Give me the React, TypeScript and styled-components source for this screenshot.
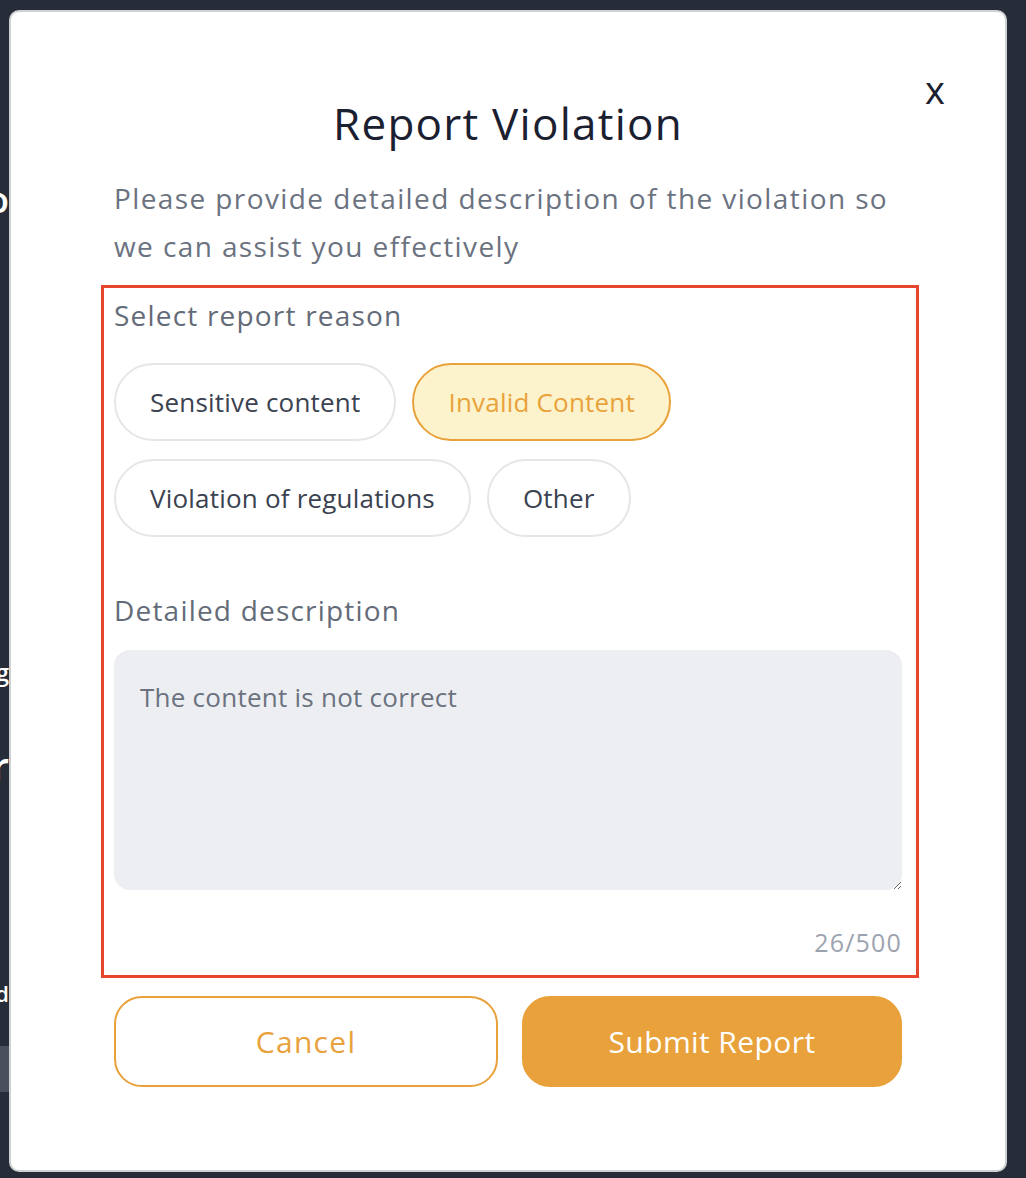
import { useState } from "react";
import styled, { createGlobalStyle } from "styled-components";

const GlobalStyle = createGlobalStyle`
  html, body {
    margin: 0;
    padding: 0;
    background: #272d38;
  }
  * {
    box-sizing: border-box;
  }
  body {
    font-family: "Open Sans", "Liberation Sans", sans-serif;
  }
`;

const ORANGE = "#e9a23b";

const Page = styled.div`
  position: relative;
  width: 1026px;
  height: 1178px;
  overflow: hidden;
  background: #272d38;
`;

/* the page behind the dialog, mostly hidden */
const Backdrop = styled.div`
  width: 9px;
  display: flex;
  flex-direction: column;
  overflow: hidden;
  color: #fff;
`;

const Peek = styled.div<{ $top: number; $size: number; $h: number }>`
  display: flex;
  justify-content: flex-end;
  white-space: nowrap;
  margin-top: ${({ $top }) => $top}px;
  height: ${({ $h }) => $h}px;
  font-size: ${({ $size }) => $size}px;
  line-height: ${({ $h }) => $h}px;
  font-weight: 600;
`;

const GreyBar = styled.div`
  margin-top: 38px;
  height: 46px;
  background: #4a505b;
`;

const Overlay = styled.div`
  position: absolute;
  inset: 0;
  padding: 10px 19px 6px 9px;
`;

const Modal = styled.div`
  position: relative;
  height: 100%;
  background: #fff;
  border: 2px solid #cfd0d3;
  border-radius: 10px;
  padding: 81px 103px 0 103px;
  display: flex;
  flex-direction: column;
`;

const Close = styled.button`
  position: absolute;
  top: 57px;
  right: 60px;
  border: none;
  background: transparent;
  padding: 0;
  font-family: inherit;
  font-size: 38px;
  line-height: 40px;
  color: #1b2030;
  cursor: pointer;
`;

const Title = styled.h2`
  margin: 0;
  text-align: center;
  font-size: 44px;
  line-height: 60px;
  font-weight: 400;
  letter-spacing: 1.25px;
  color: #1b2030;
`;

const Subtitle = styled.p`
  margin: 21px 0 0;
  font-size: 28px;
  line-height: 48px;
  letter-spacing: 1.4px;
  color: #6b7280;
`;

const Section = styled.section`
  margin: 15px -17px 0 -13px;
  border: 3px solid #e8452f;
  padding: 10px 14px 19px 10px;
  display: flex;
  flex-direction: column;
`;

const Label = styled.div<{ $gap?: number }>`
  margin-top: ${({ $gap }) => $gap ?? 0}px;
  font-size: 28px;
  line-height: 34px;
  letter-spacing: 1.2px;
  color: #646b78;
`;

const Chips = styled.div`
  margin-top: 31px;
  display: flex;
  flex-wrap: wrap;
  gap: 18px 16px;
`;

const Chip = styled.button<{ $active?: boolean }>`
  height: 78px;
  padding: 0 34px;
  border-radius: 39px;
  border: 2px solid ${({ $active }) => ($active ? ORANGE : "#e5e6e9")};
  background: ${({ $active }) => ($active ? "#fcf3cd" : "#fff")};
  color: ${({ $active }) => ($active ? ORANGE : "#3b4250")};
  font-family: inherit;
  font-size: 26px;
  letter-spacing: 0.2px;
  cursor: pointer;
`;

const TextArea = styled.textarea`
  margin-top: 23px;
  height: 240px;
  width: 100%;
  border: none;
  outline: none;
  resize: vertical;
  border-radius: 16px;
  background: #edeef1;
  padding: 30px 26px;
  font-family: inherit;
  font-size: 26px;
  line-height: 34px;
  letter-spacing: 0.25px;
  color: #6b7280;
`;

const Counter = styled.div`
  margin-top: 38px;
  text-align: right;
  font-size: 25px;
  line-height: 28px;
  letter-spacing: 1.2px;
  color: #9ca3af;
`;

const Actions = styled.div`
  margin-top: 18px;
  display: grid;
  grid-template-columns: 384px 380px;
  justify-content: space-between;
`;

const ActionButton = styled.button<{ $primary?: boolean }>`
  height: 91px;
  border-radius: 28px;
  border: 2px solid ${ORANGE};
  background: ${({ $primary }) => ($primary ? ORANGE : "#fff")};
  color: ${({ $primary }) => ($primary ? "#fff" : ORANGE)};
  font-family: inherit;
  font-size: 30px;
  letter-spacing: ${({ $primary }) => ($primary ? 0.4 : 1.3)}px;
  cursor: pointer;
`;

const reasons = [
  "Sensitive content",
  "Invalid Content",
  "Violation of regulations",
  "Other",
];

export default function App() {
  const [reason, setReason] = useState("Invalid Content");
  const [text, setText] = useState("The content is not correct");

  return (
    <Page>
      <GlobalStyle />
      <Backdrop>
        <Peek $top={180} $size={36} $h={40}>
          Logo
        </Peek>
        <Peek $top={432} $size={24} $h={40}>
          Blog
        </Peek>
        <Peek $top={52} $size={40} $h={44}>
          Our
        </Peek>
        <Peek $top={190} $size={22} $h={30}>
          Read
        </Peek>
        <GreyBar />
      </Backdrop>
      <Overlay>
        <Modal role="dialog" aria-label="Report Violation">
          <Close aria-label="Close">x</Close>
          <Title>Report Violation</Title>
          <Subtitle>
            Please provide detailed description of the violation so we can
            assist you effectively
          </Subtitle>
          <Section>
            <Label>Select report reason</Label>
            <Chips>
              {reasons.map((r) => (
                <Chip key={r} $active={r === reason} onClick={() => setReason(r)}>
                  {r}
                </Chip>
              ))}
            </Chips>
            <Label $gap={56}>Detailed description</Label>
            <TextArea
              value={text}
              maxLength={500}
              onChange={(e) => setText(e.target.value)}
            />
            <Counter>{text.length}/500</Counter>
          </Section>
          <Actions>
            <ActionButton>Cancel</ActionButton>
            <ActionButton $primary>Submit Report</ActionButton>
          </Actions>
        </Modal>
      </Overlay>
    </Page>
  );
}
